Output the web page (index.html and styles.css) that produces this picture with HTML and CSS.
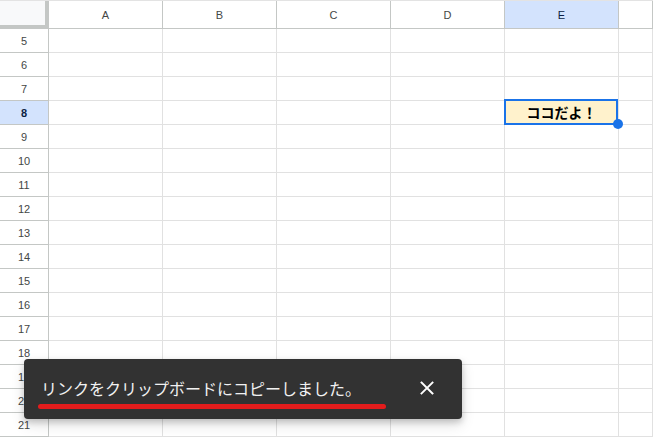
FILE: index.html
```html
<!DOCTYPE html>
<html lang="ja">
<head>
<meta charset="utf-8">
<title>シート</title>
<link rel="stylesheet" href="styles.css">
</head>
<body>
<div class="sheet">
  <div class="row head">
    <div class="corner"></div>
    <div class="col">A</div>
    <div class="col">B</div>
    <div class="col">C</div>
    <div class="col">D</div>
    <div class="col sel">E</div>
    <div class="col"></div>
  </div>
  <div class="row"><div class="num">5</div><div class="cell"></div><div class="cell"></div><div class="cell"></div><div class="cell"></div><div class="cell"></div><div class="cell"></div></div>
  <div class="row"><div class="num">6</div><div class="cell"></div><div class="cell"></div><div class="cell"></div><div class="cell"></div><div class="cell"></div><div class="cell"></div></div>
  <div class="row"><div class="num">7</div><div class="cell"></div><div class="cell"></div><div class="cell"></div><div class="cell"></div><div class="cell"></div><div class="cell"></div></div>
  <div class="row"><div class="num sel">8</div><div class="cell"></div><div class="cell"></div><div class="cell"></div><div class="cell"></div><div class="cell active"><span class="value">ココだよ！</span><span class="handle"></span></div><div class="cell"></div></div>
  <div class="row"><div class="num">9</div><div class="cell"></div><div class="cell"></div><div class="cell"></div><div class="cell"></div><div class="cell"></div><div class="cell"></div></div>
  <div class="row"><div class="num">10</div><div class="cell"></div><div class="cell"></div><div class="cell"></div><div class="cell"></div><div class="cell"></div><div class="cell"></div></div>
  <div class="row"><div class="num">11</div><div class="cell"></div><div class="cell"></div><div class="cell"></div><div class="cell"></div><div class="cell"></div><div class="cell"></div></div>
  <div class="row"><div class="num">12</div><div class="cell"></div><div class="cell"></div><div class="cell"></div><div class="cell"></div><div class="cell"></div><div class="cell"></div></div>
  <div class="row"><div class="num">13</div><div class="cell"></div><div class="cell"></div><div class="cell"></div><div class="cell"></div><div class="cell"></div><div class="cell"></div></div>
  <div class="row"><div class="num">14</div><div class="cell"></div><div class="cell"></div><div class="cell"></div><div class="cell"></div><div class="cell"></div><div class="cell"></div></div>
  <div class="row"><div class="num">15</div><div class="cell"></div><div class="cell"></div><div class="cell"></div><div class="cell"></div><div class="cell"></div><div class="cell"></div></div>
  <div class="row"><div class="num">16</div><div class="cell"></div><div class="cell"></div><div class="cell"></div><div class="cell"></div><div class="cell"></div><div class="cell"></div></div>
  <div class="row"><div class="num">17</div><div class="cell"></div><div class="cell"></div><div class="cell"></div><div class="cell"></div><div class="cell"></div><div class="cell"></div></div>
  <div class="row"><div class="num">18</div><div class="cell"></div><div class="cell"></div><div class="cell"></div><div class="cell"></div><div class="cell"></div><div class="cell"></div></div>
  <div class="row"><div class="num">19</div><div class="cell"></div><div class="cell"></div><div class="cell"></div><div class="cell"></div><div class="cell"></div><div class="cell"></div></div>
  <div class="row"><div class="num">20</div><div class="cell"></div><div class="cell"></div><div class="cell"></div><div class="cell"></div><div class="cell"></div><div class="cell"></div></div>
  <div class="row"><div class="num">21</div><div class="cell"></div><div class="cell"></div><div class="cell"></div><div class="cell"></div><div class="cell"></div><div class="cell"></div></div>
</div>

<div class="snackbar" role="status">
  <span class="snack-text">リンクをクリップボードにコピーしました。</span>
  <span class="underline"></span>
  <button class="snack-close" aria-label="閉じる">
    <svg width="14" height="14" viewBox="0 0 14 14"><path d="M1.5 1.5 L12.5 12.5 M12.5 1.5 L1.5 12.5" stroke="#ffffff" stroke-width="1.9" stroke-linecap="square" fill="none"/></svg>
  </button>
</div>
</body>
</html>
```

FILE: styles.css
```css
* { box-sizing: border-box; }

html, body {
  margin: 0;
  padding: 0;
  background: #ffffff;
  overflow: hidden;
}

body {
  font-family: "Liberation Sans", Arial, sans-serif;
  width: 653px;
  height: 437px;
  position: relative;
}

.sheet {
  display: flex;
  flex-direction: column;
}

.row {
  display: grid;
  grid-template-columns: 49px repeat(5, 114px) 1fr;
  height: 24px;
}

.row.head {
  height: 29px;
  border-top: 1px solid #e3e3e3;
}

.corner {
  background: #f8f9fa;
  border-right: 4px solid #c4c7c5;
  border-bottom: 4px solid #c4c7c5;
}

.col {
  display: flex;
  align-items: center;
  justify-content: center;
  font-size: 11px;
  color: #444746;
  border-right: 1px solid #c4c7c5;
  border-bottom: 1px solid #c4c7c5;
  padding-top: 1px;
}

.col.sel,
.num.sel {
  background: #d3e3fd;
  color: #0b1e44;
  font-weight: bold;
}

.col.sel { font-weight: normal; }

.num {
  display: flex;
  align-items: center;
  justify-content: center;
  font-size: 11px;
  color: #444746;
  border-right: 1px solid #c4c7c5;
  border-bottom: 1px solid #c4c7c5;
}

.cell {
  border-right: 1px solid #e1e1e1;
  border-bottom: 1px solid #e1e1e1;
}

.cell.active {
  position: relative;
  background: #fff2cc;
  display: flex;
  align-items: center;
  justify-content: center;
}

/* selection frame drawn over the gridlines */
.cell.active::before {
  content: "";
  position: absolute;
  top: -2px;
  left: -1px;
  right: 0;
  bottom: -1px;
  border: 2px solid #1a73e8;
  pointer-events: none;
}

.value {
  font-family: "Noto Sans CJK JP", "Liberation Sans", sans-serif;
  font-weight: bold;
  font-size: 14px;
  color: #000000;
  line-height: 1;
  margin-top: -1px;
}

.handle {
  position: absolute;
  right: -5px;
  bottom: -5px;
  width: 10px;
  height: 10px;
  border-radius: 50%;
  background: #1a73e8;
}

.snackbar {
  position: absolute;
  left: 24px;
  top: 359px;
  width: 438px;
  height: 60px;
  background: #323232;
  border-radius: 4px;
  box-shadow: 0 3px 6px rgba(0, 0, 0, 0.18), 0 6px 14px rgba(0, 0, 0, 0.12);
  display: flex;
  align-items: center;
  padding: 0 0 2px 17px;
}

.snack-text {
  flex: 1;
  font-family: "Noto Sans CJK JP", "Liberation Sans", sans-serif;
  font-size: 16px;
  color: #f1f1f1;
  line-height: 20px;
}

.underline {
  position: absolute;
  left: 14px;
  top: 45px;
  width: 348px;
  height: 5px;
  border-radius: 3px;
  background: #e31c1c;
}

.snack-close {
  width: 40px;
  height: 40px;
  margin-right: 15px;
  border: 0;
  background: transparent;
  padding: 0;
  display: flex;
  align-items: center;
  justify-content: center;
}
```
